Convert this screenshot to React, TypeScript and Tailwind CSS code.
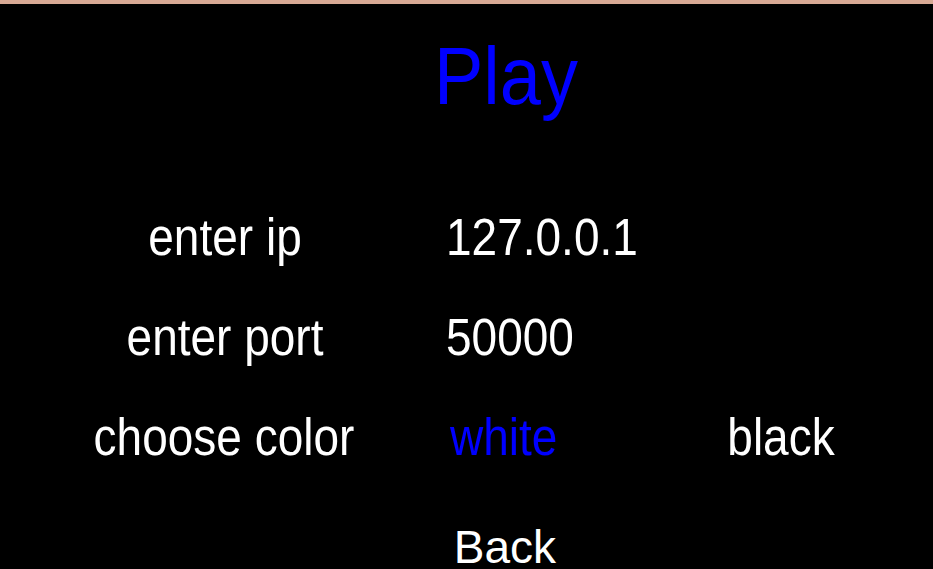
import { Fragment } from "react";

const rows = [
  { label: "enter ip", value: "127.0.0.1" },
  { label: "enter port", value: "50000" },
];

const App = () => {
  return (
    <div
      className="w-[933px] h-[569px] bg-black border-t-4 border-[#d8a994] overflow-hidden text-white"
      style={{ fontFamily: '"Liberation Sans", Arial, sans-serif' }}
    >
      <h1 className="mt-[35px] pl-[79px] text-center text-[74px] leading-none text-[#0000ff] scale-y-[1.11]">
        Play
      </h1>

      <div className="mt-[104px] grid grid-cols-[446px_214px_240px] auto-rows-[100px] text-[46px] leading-none">
        {rows.map((r) => (
          <Fragment key={r.label}>
            <div className="text-center pl-[4px] scale-y-[1.11]">{r.label}</div>
            <div className="scale-y-[1.11]">{r.value}</div>
            <div />
          </Fragment>
        ))}
        <div className="text-center pl-[2px] scale-y-[1.11]">choose color</div>
        <div className="pl-[4px] text-[#0000ff] scale-y-[1.11]">white</div>
        <div className="text-center pl-[2px] scale-y-[1.11]">black</div>
      </div>

      <div className="mt-[7px] pl-[77px] text-center text-[46px] leading-none">Back</div>
    </div>
  );
};

export default App;
